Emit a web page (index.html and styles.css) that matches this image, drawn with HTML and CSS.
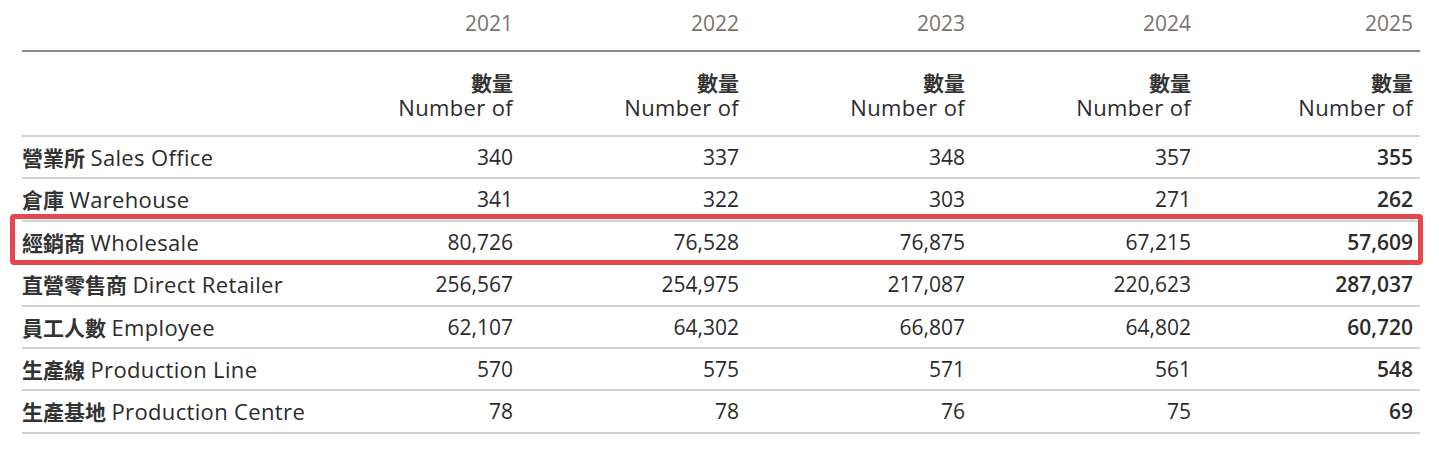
FILE: index.html
```html
<!DOCTYPE html>
<html lang="zh-Hant">
<head>
<meta charset="utf-8">
<title>Operations</title>
<link rel="stylesheet" href="styles.css">
</head>
<body>
<div class="sheet">
  <div class="row row-years">
    <div class="cell label"></div>
    <div class="cell num">2021</div>
    <div class="cell num">2022</div>
    <div class="cell num">2023</div>
    <div class="cell num">2024</div>
    <div class="cell num last">2025</div>
  </div>
  <div class="row row-units">
    <div class="cell label"></div>
    <div class="cell num"><span class="zh">數量</span><span class="en">Number of</span></div>
    <div class="cell num"><span class="zh">數量</span><span class="en">Number of</span></div>
    <div class="cell num"><span class="zh">數量</span><span class="en">Number of</span></div>
    <div class="cell num"><span class="zh">數量</span><span class="en">Number of</span></div>
    <div class="cell num last"><span class="zh">數量</span><span class="en">Number of</span></div>
  </div>
  <div class="row row-data">
    <div class="cell label"><span class="zh">營業所</span> <span class="en">Sales Office</span></div>
    <div class="cell num">340</div><div class="cell num">337</div><div class="cell num">348</div><div class="cell num">357</div><div class="cell num last strong">355</div>
  </div>
  <div class="row row-data">
    <div class="cell label"><span class="zh">倉庫</span> <span class="en">Warehouse</span></div>
    <div class="cell num">341</div><div class="cell num">322</div><div class="cell num">303</div><div class="cell num">271</div><div class="cell num last strong">262</div>
  </div>
  <div class="row row-data highlight">
    <div class="cell label"><span class="zh">經銷商</span> <span class="en">Wholesale</span></div>
    <div class="cell num">80,726</div><div class="cell num">76,528</div><div class="cell num">76,875</div><div class="cell num">67,215</div><div class="cell num last strong">57,609</div>
  </div>
  <div class="row row-data">
    <div class="cell label"><span class="zh">直營零售商</span> <span class="en">Direct Retailer</span></div>
    <div class="cell num">256,567</div><div class="cell num">254,975</div><div class="cell num">217,087</div><div class="cell num">220,623</div><div class="cell num last strong">287,037</div>
  </div>
  <div class="row row-data">
    <div class="cell label"><span class="zh">員工人數</span> <span class="en">Employee</span></div>
    <div class="cell num">62,107</div><div class="cell num">64,302</div><div class="cell num">66,807</div><div class="cell num">64,802</div><div class="cell num last strong">60,720</div>
  </div>
  <div class="row row-data">
    <div class="cell label"><span class="zh">生產線</span> <span class="en">Production Line</span></div>
    <div class="cell num">570</div><div class="cell num">575</div><div class="cell num">571</div><div class="cell num">561</div><div class="cell num last strong">548</div>
  </div>
  <div class="row row-data">
    <div class="cell label"><span class="zh">生產基地</span> <span class="en">Production Centre</span></div>
    <div class="cell num">78</div><div class="cell num">78</div><div class="cell num">76</div><div class="cell num">75</div><div class="cell num last strong">69</div>
  </div>
</div>
</body>
</html>
```

FILE: styles.css
```css
html, body {
  margin: 0;
  padding: 0;
  background: #ffffff;
}

body {
  font-family: "Open Sans", "Noto Sans CJK TC", sans-serif;
  font-size: 21px;
  color: #2b2b2b;
}

.sheet {
  width: 1398px;
  margin-left: 22px;
}

.row {
  display: grid;
  grid-template-columns: 265px 226px 226px 226px 226px 229px;
  box-sizing: border-box;
}

.cell {
  white-space: nowrap;
}

.num {
  text-align: right;
}

.num.last {
  padding-right: 7px;
}

.zh {
  font-family: "Noto Sans CJK TC", sans-serif;
  font-weight: 700;
  color: #333333;
}

.en {
  font-size: 22px;
  letter-spacing: 0.35px;
}

.row-years {
  height: 52px;
  padding-top: 8px;
  line-height: 30px;
  color: #7a746f;
  border-bottom: 2px solid #8a8a8a;
}

.row-units {
  height: 85px;
  padding-top: 17px;
  line-height: 25px;
  border-bottom: 2px solid #d2d2d2;
}

.row-units .num {
  display: flex;
  flex-direction: column;
  align-items: flex-end;
}

.row-units .zh {
  line-height: 26px;
}

.row-units .en {
  line-height: 24px;
}

.row-data {
  height: 42.4px;
  line-height: 40px;
  border-bottom: 2px solid #d2d2d2;
}

.strong {
  font-weight: 600;
}

.highlight {
  position: relative;
}

.highlight::after {
  content: "";
  position: absolute;
  left: -12px;
  right: -3px;
  top: -8px;
  bottom: -3px;
  border: 5px solid #e5474f;
  border-radius: 4px;
  pointer-events: none;
}
```
